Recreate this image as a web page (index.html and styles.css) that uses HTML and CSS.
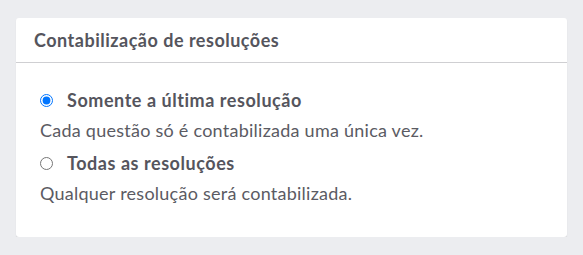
FILE: index.html
```html
<!DOCTYPE html>
<html>
<head><meta charset="utf-8"><link rel="stylesheet" href="styles.css"></head>
<body>
<div class="card">
  <div class="card-header">Contabilização de resoluções</div>
  <div class="card-body">
    <label class="option">
      <input type="radio" name="r" checked>
      <span class="opt-title">Somente a última resolução</span>
    </label>
    <div class="desc">Cada questão só é contabilizada uma única vez.</div>
    <label class="option">
      <input type="radio" name="r">
      <span class="opt-title">Todas as resoluções</span>
    </label>
    <div class="desc">Qualquer resolução será contabilizada.</div>
  </div>
</div>
</body>
</html>
```
FILE: styles.css
```css
html, body { margin: 0; padding: 0; }
body {
  background: #ecedf0;
  font-family: Lato, "Noto Sans", sans-serif;
  color: #5b5b63;
  padding: 18px 16px 0 16px;
  width: 583px;
  box-sizing: border-box;
}
.card {
  background: #fff;
  border-radius: 3px;
  box-shadow: 0 1px 1px rgba(0,0,0,0.12);
  height: 219px;
}
.card-header {
  height: 45px;
  box-sizing: border-box;
  padding: 0 18px 1px 18px;
  display: flex;
  align-items: center;
  font-size: 18px;
  letter-spacing: 0.5px;
  font-weight: 700;
  color: #55555d;
  border-bottom: 1px solid #cfcfd2;
}
.card-body {
  padding: 26px 24px 0 24px;
}
.option {
  display: flex;
  align-items: center;
  height: 22px;
}
.option input {
  margin: 0 14px 0 0;
  width: 13px;
  height: 13px;
}
.opt-title {
  font-size: 18px;
  letter-spacing: 0.55px;
  font-weight: 700;
  color: #55555d;
}
.desc {
  font-size: 18px;
  letter-spacing: 0.25px;
  margin: 8px 0 11px 0;
  line-height: 22px;
}
```
